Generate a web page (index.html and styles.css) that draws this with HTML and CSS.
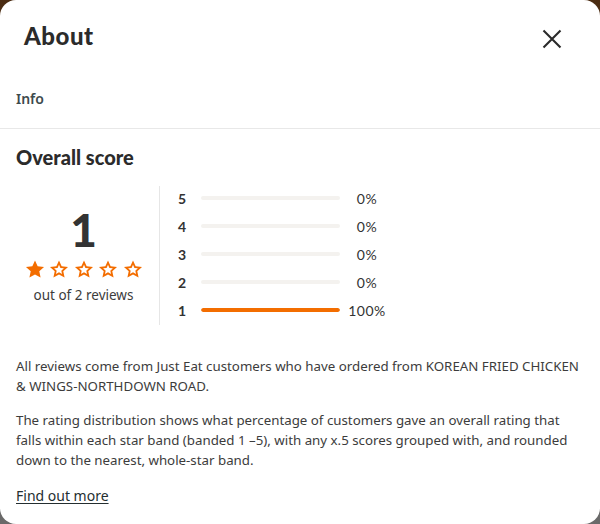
FILE: index.html
```html
<!DOCTYPE html>
<html>
<head>
<meta charset="utf-8">
<link rel="stylesheet" href="styles.css">
</head>
<body>
<div class="modal">
  <div class="header">
    <h1 class="title">About</h1>
    <button class="close" aria-label="Close">
      <svg width="20" height="20" viewBox="0 0 20 20"><path d="M1.5 1.5 L18.5 18.5 M18.5 1.5 L1.5 18.5" stroke="#2a2a2a" stroke-width="2.1"/></svg>
    </button>
  </div>
  <div class="tabs"><span class="tab">Info</span></div>
  <div class="content">
    <h2 class="section-title">Overall score</h2>
    <div class="score">
      <div class="summary">
        <div class="big">1</div>
        <div class="stars">
          <svg class="star" viewBox="0 0 20 20"><path d="M10 1.4 L12.65 7.26 L19.03 7.96 L14.28 12.29 L15.58 18.59 L10 15.4 L4.42 18.59 L5.72 12.29 L0.97 7.96 L7.35 7.26 Z" fill="#f36d00"/></svg>
          <svg class="star" viewBox="0 0 20 20"><path fill-rule="evenodd" d="M10 1.4 L12.65 7.26 L19.03 7.96 L14.28 12.29 L15.58 18.59 L10 15.4 L4.42 18.59 L5.72 12.29 L0.97 7.96 L7.35 7.26 Z M10 5.77 L11.43 8.93 L14.88 9.31 L12.31 11.65 L13.02 15.05 L10 13.33 L6.98 15.05 L7.69 11.65 L5.12 9.31 L8.57 8.93 Z" fill="#f36d00"/></svg>
          <svg class="star" viewBox="0 0 20 20"><path fill-rule="evenodd" d="M10 1.4 L12.65 7.26 L19.03 7.96 L14.28 12.29 L15.58 18.59 L10 15.4 L4.42 18.59 L5.72 12.29 L0.97 7.96 L7.35 7.26 Z M10 5.77 L11.43 8.93 L14.88 9.31 L12.31 11.65 L13.02 15.05 L10 13.33 L6.98 15.05 L7.69 11.65 L5.12 9.31 L8.57 8.93 Z" fill="#f36d00"/></svg>
          <svg class="star" viewBox="0 0 20 20"><path fill-rule="evenodd" d="M10 1.4 L12.65 7.26 L19.03 7.96 L14.28 12.29 L15.58 18.59 L10 15.4 L4.42 18.59 L5.72 12.29 L0.97 7.96 L7.35 7.26 Z M10 5.77 L11.43 8.93 L14.88 9.31 L12.31 11.65 L13.02 15.05 L10 13.33 L6.98 15.05 L7.69 11.65 L5.12 9.31 L8.57 8.93 Z" fill="#f36d00"/></svg>
          <svg class="star" viewBox="0 0 20 20"><path fill-rule="evenodd" d="M10 1.4 L12.65 7.26 L19.03 7.96 L14.28 12.29 L15.58 18.59 L10 15.4 L4.42 18.59 L5.72 12.29 L0.97 7.96 L7.35 7.26 Z M10 5.77 L11.43 8.93 L14.88 9.31 L12.31 11.65 L13.02 15.05 L10 13.33 L6.98 15.05 L7.69 11.65 L5.12 9.31 L8.57 8.93 Z" fill="#f36d00"/></svg>
        </div>
        <div class="count">out of 2 reviews</div>
      </div>
      <div class="bars">
        <div class="row"><span class="n">5</span><span class="track"><span class="fill" style="width:0%"></span></span><span class="pct">0%</span></div>
        <div class="row"><span class="n">4</span><span class="track"><span class="fill" style="width:0%"></span></span><span class="pct">0%</span></div>
        <div class="row"><span class="n">3</span><span class="track"><span class="fill" style="width:0%"></span></span><span class="pct">0%</span></div>
        <div class="row"><span class="n">2</span><span class="track"><span class="fill" style="width:0%"></span></span><span class="pct">0%</span></div>
        <div class="row"><span class="n">1</span><span class="track"><span class="fill" style="width:100%"></span></span><span class="pct">100%</span></div>
      </div>
    </div>
    <p class="text">All reviews come from Just Eat customers who have ordered from KOREAN FRIED CHICKEN &amp; WINGS-NORTHDOWN ROAD.</p>
    <p class="text second">The rating distribution shows what percentage of customers gave an overall rating that falls within each star band (banded 1 –5), with any x.5 scores grouped with, and rounded down to the nearest, whole-star band.</p>
    <a class="link" href="#">Find out more</a>
  </div>
</div>
</body>
</html>
```
FILE: styles.css
```css
html, body {
  margin: 0;
  padding: 0;
}
body {
  width: 600px;
  height: 524px;
  background: linear-gradient(to bottom, #4b2c12 0%, #5c4c40 50%, #6a6a6a 100%);
  font-family: "Noto Sans", "Liberation Sans", sans-serif;
  color: #3c3c3c;
  overflow: hidden;
}
.modal {
  box-sizing: border-box;
  width: 600px;
  height: 524px;
  background: #fff;
  border-radius: 16px;
}
.header {
  display: flex;
  justify-content: space-between;
  align-items: flex-start;
  padding: 22px 38px 0 24px;
  height: 34px;
}
.title {
  margin: 0;
  font-family: Lato, "Noto Sans", sans-serif;
  font-weight: 900;
  font-size: 24px;
  line-height: 28.8px;
  letter-spacing: 0.5px;
  color: #2b2b2b;
}
.close {
  border: 0;
  background: none;
  padding: 0;
  margin-top: 7px;
  width: 20px;
  height: 20px;
  display: flex;
}
.tabs {
  margin-top: 26px;
  height: 46px;
  border-bottom: 1px solid #e8e8e8;
  padding: 0 16px;
  display: flex;
  align-items: flex-start;
}
.tab {
  font-size: 14px;
  font-weight: 600;
  color: #3d4a4d;
  line-height: 20px;
  padding-top: 7px;
}
.content {
  padding: 16px 16px 0 16px;
}
.section-title {
  margin: 0;
  font-family: Lato, "Noto Sans", sans-serif;
  font-weight: 900;
  font-size: 20px;
  line-height: 24px;
  color: #2b2b2b;
}
.score {
  display: flex;
  margin-top: 17px;
  height: 139px;
}
.summary {
  width: 144px;
  border-right: 1px solid #e6e6e6;
  display: flex;
  flex-direction: column;
  align-items: center;
  padding: 19px 8px 0 0;
  box-sizing: border-box;
}
.big {
  font-family: Lato, sans-serif;
  font-weight: 900;
  font-size: 46px;
  line-height: 50px;
  color: #333;
}
.stars {
  display: flex;
  gap: 4.5px;
  margin-top: 4px;
}
.star {
  width: 20px;
  height: 20px;
}
.count {
  font-size: 13.5px;
  color: #3c3c3c;
  margin-top: 7px;
}
.bars {
  padding-left: 18px;
  display: flex;
  flex-direction: column;
  gap: 8px;
  padding-top: 2px;
}
.row {
  display: flex;
  align-items: center;
  height: 20px;
}
.n {
  width: 23px;
  font-family: Lato, sans-serif;
  font-weight: 700;
  font-size: 14px;
  color: #333;
}
.track {
  width: 139px;
  height: 4px;
  border-radius: 2px;
  background: #f4f2ef;
  overflow: hidden;
  display: flex;
}
.fill {
  height: 4px;
  background: #f36d00;
  border-radius: 2px;
}
.pct {
  width: 54px;
  text-align: center;
  font-family: Lato, sans-serif;
  font-size: 14px;
  color: #333;
  letter-spacing: 0.5px;
}
.text {
  margin: 31px 0 0 0;
  font-size: 13.3px;
  line-height: 20px;
  color: #3c3c3c;
}
.text.second {
  margin-top: 14px;
}
.link {
  display: inline-block;
  margin-top: 16px;
  font-size: 14px;
  color: #242e30;
  text-decoration: underline;
  text-underline-offset: 2px;
}
```
